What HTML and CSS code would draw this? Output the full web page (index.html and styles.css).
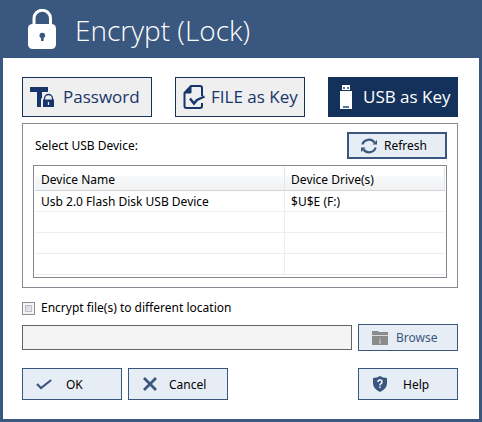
FILE: index.html
```html
<!DOCTYPE html>
<html lang="en">
<head>
<meta charset="utf-8">
<title>Encrypt (Lock)</title>
<link rel="stylesheet" href="styles.css">
</head>
<body>
<div class="window">
  <header class="titlebar">
    <svg class="lock" width="28" height="40" viewBox="0 0 28 40" aria-hidden="true">
      <path d="M6 17V9.500a8 8 0 0 1 16.500 0V17" fill="none" stroke="#fff" stroke-width="3"/>
      <rect x="0" y="15" width="28" height="25" rx="4.500" fill="#fff"/>
      <path d="M14.300 24v8" stroke="#3a577f" stroke-width="2.600"/>
      <circle cx="14.300" cy="26.500" r="2.800" fill="#3a577f"/>
    </svg>
    <h1>Encrypt (Lock)</h1>
  </header>
  <main class="content">
    <nav class="tabs">
      <button class="tab" type="button">
        <svg width="25" height="22" viewBox="0 0 25 22" aria-hidden="true">
          <path d="M0 1h18v5h-6v15H7V6H0z" fill="#17356a"/>
          <path d="M11 12.500h14V22H11z" fill="#efefef"/>
          <path d="M14.500 14v-1.500a4 4 0 0 1 8 0V14" fill="#efefef" stroke="#17356a" stroke-width="1.300"/>
          <path d="M13 13.500h11V21H13z" fill="#17356a"/>
          <path d="M18.500 16v3" stroke="#efefef" stroke-width="1.300"/>
        </svg>
        <span>Password</span>
      </button>
      <button class="tab" type="button">
        <svg width="24" height="24" viewBox="0 0 24 24" aria-hidden="true">
          <path d="M19 11V3q0-2-2-2H8L1.500 8v13q0 2 2 2H17q2 0 2-2v-3" fill="none" stroke="#17356a" stroke-width="2"/>
          <path d="M8 1v7H1.500z" fill="#17356a" stroke="#17356a"/>
          <path d="M7 13.500l4 5 3-3.500 7.500-3.500" fill="none" stroke="#17356a" stroke-width="2.400"/>
        </svg>
        <span>FILE as Key</span>
      </button>
      <button class="tab tab-active" type="button">
        <svg width="12" height="24" viewBox="0 0 12 24" aria-hidden="true">
          <path d="M2 0h8v5H2zM0 6h12v18H0z" fill="#fff"/>
          <path d="M3 2h2v2H3zM7 2h2v2H7zM3 21h6v2H3z" fill="#52799b"/>
        </svg>
        <span>USB as Key</span>
      </button>
    </nav>

    <section class="group">
      <div class="group-head">
        <h2 id="devices">Select USB Device:</h2>
        <button class="button button-refresh" type="button">
          <svg width="16" height="16" viewBox="0 0 16 16" aria-hidden="true">
            <g fill="none" stroke="#3a577f" stroke-width="2.200">
              <path d="M1.300 6.500a7 7 0 0 1 12.200-2"/>
              <path d="M14.700 9.500a7 7 0 0 1-12.200 2"/>
            </g>
            <path d="M16 2v4.500h-4.500zM0 14V9.500h4.500z" fill="#3a577f"/>
          </svg>
          <span>Refresh</span>
        </button>
      </div>
      <div class="list">
        <table aria-labelledby="devices">
          <thead><tr><th class="name">Device Name</th><th>Device Drive(s)</th></tr></thead>
          <tbody>
            <tr><td>Usb 2.0 Flash Disk USB Device</td><td>$U$E (F:)</td></tr>
            <tr><td></td><td></td></tr>
            <tr><td></td><td></td></tr>
            <tr><td></td><td></td></tr>
          </tbody>
        </table>
      </div>
    </section>

    <label class="check"><input type="checkbox"><span>Encrypt file(s) to different location</span></label>

    <div class="location">
      <input class="path" type="text" aria-label="Location" disabled>
      <button class="button button-browse" type="button" disabled>
        <svg width="16" height="14" viewBox="0 0 16 14" aria-hidden="true">
          <path d="M0 0h6l1 1h9v3H0zM0 5h16v9H0z" fill="#8b8b8b"/>
          <path d="M0 4.500h16" stroke="#d5d9de"/>
          <path d="M8 7v1M8 9v4" stroke="#d5d9de" stroke-width="1"/>
        </svg>
        <span>Browse</span>
      </button>
    </div>

    <footer class="actions">
      <button class="button button-ok" type="button">
        <svg width="16" height="11" viewBox="0 0 16 11" aria-hidden="true">
          <path d="M1 5l4 4L15.200 1" fill="none" stroke="#3a577f" stroke-width="2.200"/>
        </svg>
        <span>OK</span>
      </button>
      <button class="button button-cancel" type="button">
        <svg width="14" height="14" viewBox="0 0 14 14" aria-hidden="true">
          <path d="M1 1l12 12M13 1L1 13" stroke="#3a577f" stroke-width="2.800"/>
        </svg>
        <span>Cancel</span>
      </button>
      <button class="button button-help" type="button">
        <svg width="14" height="16" viewBox="0 0 14 16" aria-hidden="true">
          <path d="M7 0q3 2 7 2v5q0 6-7 9Q0 13 0 7V2q4 0 7-2z" fill="#3a577f"/>
          <path d="M5 6q0-2 2-2t2 2q0 1-1 1.500T7 9.500M7 10.500V12" fill="none" stroke="#fff" stroke-width="1.400"/>
        </svg>
        <span>Help</span>
      </button>
    </footer>
  </main>
</div>
</body>
</html>
```
FILE: styles.css
```css
* {
  box-sizing: border-box;
}

body {
  margin: 0;
  font: 12px/18px "Noto Sans", "Open Sans", sans-serif;
  color: #000;
}

.window {
  min-height: 100vh;
  border: 3px solid #3a577f;
  border-top: 0;
  background: #fff;
}

.titlebar {
  display: flex;
  align-items: center;
  gap: 19px;
  height: 58px;
  padding-left: 25px;
  background: #3a577f;
  color: #fff;
}

h1 {
  margin: 0;
  padding-top: 2px;
  font: 300 28px/36px "Open Sans", "Noto Sans", sans-serif;
}

h2 {
  margin: 0;
  font: inherit;
}

svg {
  display: block;
  flex: none;
}

button {
  font: inherit;
  color: inherit;
  white-space: nowrap;
}

.content {
  padding: 19px 21px 16px 19px;
}

.tabs {
  display: flex;
  justify-content: space-between;
  margin-bottom: 6px;
}

.tab {
  display: flex;
  align-items: center;
  gap: 8px;
  width: 130px;
  height: 40px;
  padding: 0 0 0 7px;
  border: 1px solid #14315c;
  background: #efefef;
  color: #17356a;
  font: 17px/24px "Open Sans", "Noto Sans", sans-serif;
}

.tab:nth-child(2) {
  gap: 4px;
}

.tab-active {
  gap: 11px;
  padding-left: 11px;
  background: #14315c;
  color: #fff;
}

.group {
  padding: 8px 10px 9px;
  border: 1px solid #888a95;
}

.group-head {
  display: flex;
  align-items: center;
  justify-content: space-between;
  padding-left: 2px;
  margin-bottom: 6px;
}

.button {
  display: flex;
  align-items: center;
  width: 100px;
  height: 32px;
  padding: 0 0 0 13px;
  border: 1px solid #3a577f;
  background: #e6edf5;
}

.button-refresh {
  gap: 7px;
  height: 27px;
  padding-left: 12px;
  border-width: 2px;
}

.list {
  padding: 1px 1px 2px;
  border: 1px solid #828790;
}

table {
  width: 100%;
  border-collapse: separate;
  border-spacing: 0;
  table-layout: fixed;
}

th,
td {
  height: 21px;
  padding: 2px 6px 0;
  border-right: 1px solid #ededed;
  border-bottom: 1px solid #ededed;
  text-align: left;
  font-weight: normal;
}

td:last-child {
  border-right: 0;
}

th {
  height: 24px;
  border-right-color: #e3e5e8;
  border-bottom-color: #d5d5d5;
  background: linear-gradient(#fff 40%, #f7f8fa 42%, #f1f2f4);
}

.name {
  width: 61%;
}

.check {
  display: flex;
  align-items: center;
  gap: 6px;
  width: max-content;
  margin: 11px 0 7px;
}

.check input {
  appearance: none;
  width: 13px;
  height: 13px;
  margin: 0;
  border: 1px solid #8e8f8f;
  outline: 1px solid #bdc1c6;
  outline-offset: -4px;
  background: linear-gradient(135deg, #c5cad2, #f4f4f4);
  box-shadow: inset 0 0 0 2px #f4f4f4;
}

.location {
  display: flex;
  align-items: center;
  gap: 6px;
  margin-bottom: 17px;
}

.path {
  flex: 1;
  min-width: 0;
  height: 25px;
  padding: 0 4px;
  border: 1px solid #646464;
  background: #f4f4f4;
  font: inherit;
}

.button-browse {
  gap: 8px;
  height: 27px;
  color: #3a577f;
}

.button span {
  padding-top: 1px;
}

.actions {
  display: flex;
  gap: 6px;
}

.button-ok {
  gap: 14px;
}

.button-cancel {
  gap: 12px;
  padding-left: 14px;
}

.button-help {
  gap: 16px;
  padding-left: 14px;
  margin-left: auto;
}
```
